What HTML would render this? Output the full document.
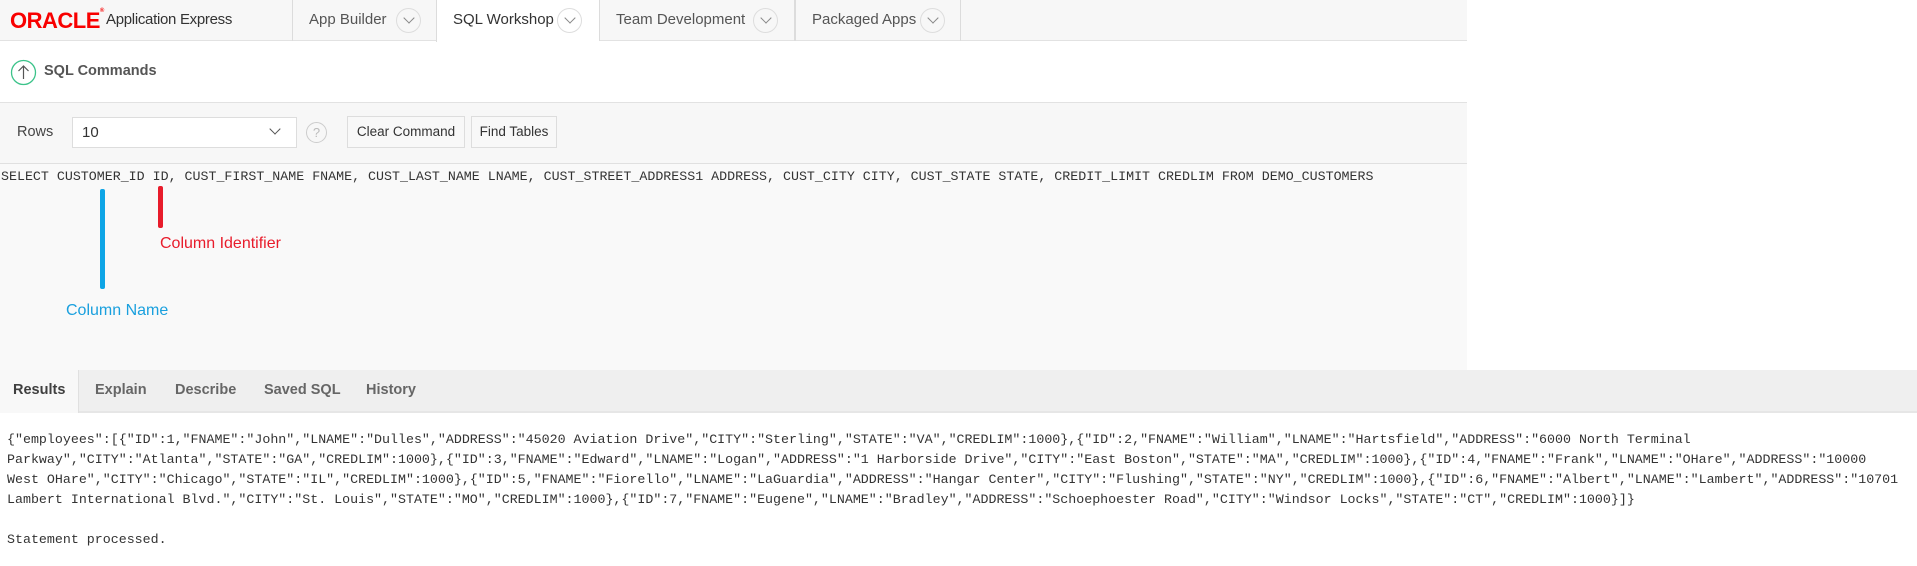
<!DOCTYPE html>
<html><head><meta charset="utf-8"><style>
*{margin:0;padding:0;box-sizing:border-box}
body{width:1917px;height:566px;background:#fff;position:relative;overflow:hidden;font-family:"Liberation Sans",sans-serif;color:#404040}
.a{position:absolute}
.hdr{left:0;top:0;width:1467px;height:41px;background:#f7f7f7;border-bottom:1px solid #e2e2e2}
.tab{top:0;height:41px;border-left:1px solid #dcdcdc;font-size:15px;color:#555;line-height:40px}
.circ{position:absolute;width:25px;height:25px;border:1px solid #ddd;border-radius:50%;top:8px}
.circ:after{content:"";position:absolute;left:8px;top:5px;width:7px;height:7px;border-right:1px solid #888;border-bottom:1px solid #888;transform:rotate(45deg)}
.mono{font-family:"Liberation Mono",monospace;font-size:13.3px;color:#333;white-space:pre}
.btn{top:116px;height:32px;border:1px solid #ddd;background:#f8f8f8;font-size:13.5px;line-height:30px;text-align:center;color:#333}
.rt{top:370px;height:43px;line-height:40px;font-size:14.5px;font-weight:bold;color:#666}
</style></head><body>
<div class="a hdr"></div>
<div class="a" style="left:10px;top:8px;font-size:22px;font-weight:bold;color:#f80000;letter-spacing:-0.5px">ORACLE<span style="font-size:6px;vertical-align:top">®</span></div>
<div class="a" style="left:106px;top:11px;font-size:15px;color:#333;letter-spacing:-0.3px">Application Express</div>
<div class="a tab" style="left:292px;width:144px"><span style="position:absolute;left:16px">App Builder</span><div class="circ" style="left:103px"></div></div>
<div class="a tab" style="left:436px;width:163px;background:#fff;height:42px"><span style="position:absolute;left:16px;color:#333">SQL Workshop</span><div class="circ" style="left:120px"></div></div>
<div class="a tab" style="left:599px;width:196px;border-right:1px solid #dcdcdc"><span style="position:absolute;left:16px">Team Development</span><div class="circ" style="left:153px"></div></div>
<div class="a tab" style="left:795px;width:166px;border-right:1px solid #dcdcdc"><span style="position:absolute;left:16px">Packaged Apps</span><div class="circ" style="left:124px"></div></div>

<div class="a" style="left:0;top:42px;width:1467px;height:61px;background:#fff;border-bottom:1px solid #e2e2e2"></div>
<svg class="a" style="left:10px;top:59px" width="27" height="27"><circle cx="13.5" cy="13.5" r="12" fill="none" stroke="#3cc38a" stroke-width="1.3"/><path d="M13.5 20V7M8.5 12l5-5 5 5" fill="none" stroke="#555" stroke-width="1.2"/></svg>
<div class="a" style="left:44px;top:63px;font-size:14.5px;font-weight:bold;color:#555">SQL Commands</div>

<div class="a" style="left:0;top:103px;width:1467px;height:61px;background:#f7f7f7;border-bottom:1px solid #e0e0e0"></div>
<div class="a" style="left:17px;top:124px;font-size:14.5px;color:#444">Rows</div>
<div class="a" style="left:72px;top:117px;width:225px;height:31px;background:#fff;border:1px solid #ddd;font-size:15px;line-height:29px;padding-left:9px;color:#333">10</div>
<div class="a" style="left:271px;top:125px;width:8px;height:8px;border-right:1.3px solid #555;border-bottom:1.3px solid #555;transform:rotate(45deg)"></div>
<div class="a" style="left:306px;top:122px;width:21px;height:21px;border:1.3px solid #ccc;border-radius:50%;color:#bbb;font-size:13px;text-align:center;line-height:19px">?</div>
<div class="a btn" style="left:347px;width:118px">Clear Command</div>
<div class="a btn" style="left:471px;width:86px">Find Tables</div>

<div class="a" style="left:0;top:164px;width:1467px;height:206px;background:#f9f9f9"></div>
<div class="a mono" style="left:1px;top:169px">SELECT CUSTOMER_ID ID, CUST_FIRST_NAME FNAME, CUST_LAST_NAME LNAME, CUST_STREET_ADDRESS1 ADDRESS, CUST_CITY CITY, CUST_STATE STATE, CREDIT_LIMIT CREDLIM FROM DEMO_CUSTOMERS</div>
<div class="a" style="left:100px;top:189px;width:5px;height:100px;background:#0ea5e6;border-radius:2px"></div>
<div class="a" style="left:158px;top:186px;width:5px;height:42px;background:#e81c2b;border-radius:2px"></div>
<div class="a" style="left:160px;top:235px;font-size:16px;color:#e81c2b">Column Identifier</div>
<div class="a" style="left:66px;top:302px;font-size:16px;color:#1aa0de">Column Name</div>

<div class="a" style="left:0;top:370px;width:1917px;height:43px;background:#efefef;border-bottom:2px solid #e6e6e6"></div>
<div class="a" style="left:0;top:370px;width:79px;height:43px;background:#f8f8f8;border-right:1px solid #e0e0e0"></div>
<div class="a rt" style="left:13px;color:#404040">Results</div>
<div class="a rt" style="left:95px">Explain</div>
<div class="a rt" style="left:175px">Describe</div>
<div class="a rt" style="left:264px">Saved SQL</div>
<div class="a rt" style="left:366px">History</div>

<div class="a mono" style="left:7px;top:430px;line-height:20px">{"employees":[{"ID":1,"FNAME":"John","LNAME":"Dulles","ADDRESS":"45020 Aviation Drive","CITY":"Sterling","STATE":"VA","CREDLIM":1000},{"ID":2,"FNAME":"William","LNAME":"Hartsfield","ADDRESS":"6000 North Terminal
Parkway","CITY":"Atlanta","STATE":"GA","CREDLIM":1000},{"ID":3,"FNAME":"Edward","LNAME":"Logan","ADDRESS":"1 Harborside Drive","CITY":"East Boston","STATE":"MA","CREDLIM":1000},{"ID":4,"FNAME":"Frank","LNAME":"OHare","ADDRESS":"10000
West OHare","CITY":"Chicago","STATE":"IL","CREDLIM":1000},{"ID":5,"FNAME":"Fiorello","LNAME":"LaGuardia","ADDRESS":"Hangar Center","CITY":"Flushing","STATE":"NY","CREDLIM":1000},{"ID":6,"FNAME":"Albert","LNAME":"Lambert","ADDRESS":"10701
Lambert International Blvd.","CITY":"St. Louis","STATE":"MO","CREDLIM":1000},{"ID":7,"FNAME":"Eugene","LNAME":"Bradley","ADDRESS":"Schoephoester Road","CITY":"Windsor Locks","STATE":"CT","CREDLIM":1000}]}

Statement processed.</div>
</body></html>
